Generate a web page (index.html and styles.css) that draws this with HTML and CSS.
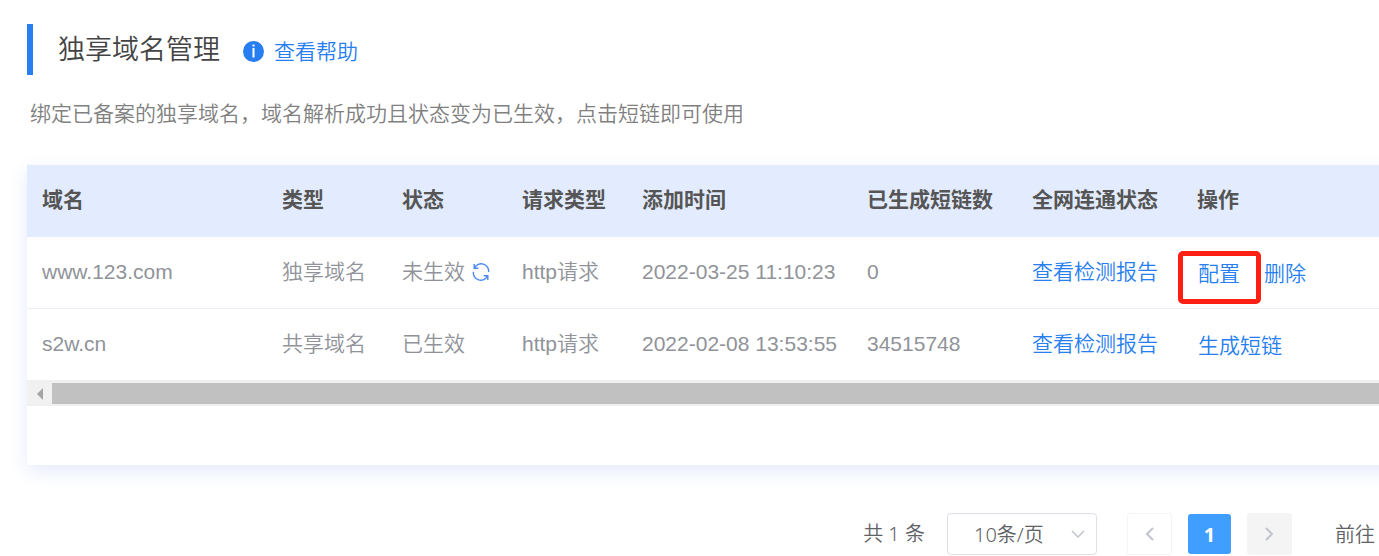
FILE: index.html
```
<!DOCTYPE html>
<html lang="zh-CN">
<head>
    <meta charset="UTF-8">
    <meta name="viewport" content="width=device-width, initial-scale=1.0">
    <title>独享域名管理</title>
    <link rel="stylesheet" href="styles.css">
</head>
<body>
    <div class="container">
        <div class="page-header">
            <h1>独享域名管理</h1>
            <a class="help-link" href="#">
                <svg class="info-icon" viewBox="0 0 21 21" aria-hidden="true">
                    <circle cx="10.5" cy="10.5" r="10.5" fill="#267ef0"/>
                    <path d="M9.5 3.5h2v2h-2zM9.5 7h2v9.5h-2z" fill="#fff"/>
                </svg>
                <span>查看帮助</span>
            </a>
        </div>
        <p class="description">绑定已备案的独享域名，域名解析成功且状态变为已生效，点击短链即可使用</p>

        <div class="table-card">
            <table>
                <colgroup>
                    <col class="col-domain">
                    <col class="col-small">
                    <col class="col-small">
                    <col class="col-small">
                    <col class="col-time">
                    <col class="col-medium">
                    <col class="col-medium">
                    <col>
                </colgroup>
                <thead>
                    <tr>
                        <th>域名</th>
                        <th>类型</th>
                        <th>状态</th>
                        <th>请求类型</th>
                        <th>添加时间</th>
                        <th>已生成短链数</th>
                        <th>全网连通状态</th>
                        <th>操作</th>
                    </tr>
                </thead>
                <tbody>
                    <tr>
                        <td>www.123.com</td>
                        <td>独享域名</td>
                        <td>
                            <div class="status">
                                <span>未生效</span>
                                <button class="refresh" type="button" aria-label="刷新">
                                    <svg viewBox="0 0 18 18" aria-hidden="true">
                                        <path d="M2.2 1v4.2h4.2M2.6 5A7.4 7.4 0 0 1 16.6 9.2M15.8 17v-4.2h-4.2M15.4 13A7.4 7.4 0 0 1 1.4 8.8"/>
                                    </svg>
                                </button>
                            </div>
                        </td>
                        <td>http请求</td>
                        <td>2022-03-25 11:10:23</td>
                        <td>0</td>
                        <td><a href="#">查看检测报告</a></td>
                        <td>
                            <div class="actions">
                                <a class="marked" href="#">配置</a>
                                <a href="#">删除</a>
                            </div>
                        </td>
                    </tr>
                    <tr>
                        <td>s2w.cn</td>
                        <td>共享域名</td>
                        <td>已生效</td>
                        <td>http请求</td>
                        <td>2022-02-08 13:53:55</td>
                        <td>34515748</td>
                        <td><a href="#">查看检测报告</a></td>
                        <td>
                            <div class="actions">
                                <a href="#">生成短链</a>
                            </div>
                        </td>
                    </tr>
                </tbody>
            </table>
            <div class="scrollbar">
                <button class="scroll-left" type="button" aria-label="向左滚动">
                    <svg viewBox="0 0 6 12" aria-hidden="true"><path d="M6 0v12L0 6z"/></svg>
                </button>
                <div class="scroll-thumb"></div>
            </div>
        </div>

        <div class="pagination">
            <span class="total">共 1 条</span>
            <div class="page-size">
                <select aria-label="每页条数">
                    <option>10条/页</option>
                    <option>20条/页</option>
                </select>
                <svg class="select-arrow" viewBox="0 0 14 8" aria-hidden="true"><path d="M1 1l6 6 6-6"/></svg>
            </div>
            <button class="page-btn prev" type="button" aria-label="上一页">
                <svg viewBox="0 0 9 14" aria-hidden="true"><path d="M8 1L2 7l6 6"/></svg>
            </button>
            <button class="page-btn active" type="button">1</button>
            <button class="page-btn next" type="button" aria-label="下一页">
                <svg viewBox="0 0 9 14" aria-hidden="true"><path d="M1 1l6 6-6 6"/></svg>
            </button>
            <span class="jump">前往</span>
        </div>
    </div>
</body>
</html>
```
FILE: styles.css
```
* {
    box-sizing: border-box;
}
body {
    margin: 0;
    background-color: #fff;
    font-family: "Liberation Sans", "Noto Sans CJK SC", sans-serif;
    font-size: 21px;
    font-weight: 350;
    line-height: 30px;
    color: #909399;
    overflow: hidden;
}
a {
    color: #267ef0;
    text-decoration: none;
}
button {
    padding: 0;
    border: none;
    cursor: pointer;
}
svg {
    display: block;
}
.container {
    padding: 24px 0 0 27px;
}
.page-header {
    display: flex;
    align-items: center;
    height: 51px;
    padding-left: 25px;
    border-left: 6px solid #267ef0;
}
h1 {
    margin: 0;
    font-size: 27px;
    font-weight: 350;
    color: #444;
}
.help-link {
    display: flex;
    align-items: center;
    gap: 10px;
    margin-left: 23px;
    padding-top: 4px;
}
.info-icon {
    width: 21px;
    height: 21px;
}
.description {
    margin: 24px 0 36px;
    padding-left: 3px;
    color: #808080;
}

/* table */
.table-card {
    margin-right: -24px;
    padding-bottom: 59px;
    background-color: #fff;
    box-shadow: 0 6px 18px #e4eafa;
}
table {
    width: 100%;
    table-layout: fixed;
    border-collapse: separate;
    border-spacing: 0;
}
.col-domain {
    width: 240px;
}
.col-small {
    width: 120px;
}
.col-time {
    width: 225px;
}
.col-medium {
    width: 165px;
}
th, td {
    height: 72px;
    padding: 0 0 2px 15px;
    border-bottom: 1px solid #ebeef5;
    text-align: left;
    white-space: nowrap;
}
th {
    background-color: #e3ecff;
    border-bottom-color: #e3ecff;
    color: #555;
    font-weight: bold;
}
tbody tr:last-child td {
    height: 71px;
    border-bottom: none;
}
.status {
    display: flex;
    align-items: center;
    gap: 7px;
}
.refresh {
    background: none;
}
.refresh svg {
    width: 18px;
    height: 18px;
    fill: none;
    stroke: #4b88f3;
    stroke-width: 1.4;
}
.actions {
    display: flex;
    gap: 24px;
    padding: 4px 0 0 1px;
}
.marked {
    position: relative;
}
.marked::after {
    content: "";
    position: absolute;
    inset: -8px -21px -15px -20px;
    border: 5px solid #ff2013;
    border-radius: 5px;
}
.scrollbar {
    display: flex;
    height: 26px;
    padding: 3px 0 2px;
    background-color: #f0f0f2;
}
.scroll-left {
    display: flex;
    align-items: center;
    justify-content: center;
    width: 25px;
    background-color: #f1f1f1;
}
.scroll-left svg {
    width: 6px;
    height: 12px;
    fill: #a3a3a3;
}
.scroll-thumb {
    flex: 1;
    background-color: #c1c1c1;
}

/* pagination */
.pagination {
    display: flex;
    align-items: center;
    justify-content: flex-end;
    margin-top: 48px;
    padding-right: 4px;
    font-family: "Noto Sans", "Noto Sans CJK SC", sans-serif;
    font-size: 20px;
    color: #606266;
    white-space: nowrap;
}
.total {
    margin-right: 22px;
}
.page-size {
    display: grid;
    align-items: center;
    margin-right: 30px;
}
.page-size select,
.select-arrow {
    grid-area: 1 / 1;
}
.page-size select {
    appearance: none;
    width: 150px;
    height: 42px;
    padding: 2px 0 0 26px;
    border: 1px solid #dcdfe6;
    border-radius: 4px;
    background-color: #fff;
    color: #606266;
    font: inherit;
}
.select-arrow {
    justify-self: end;
    width: 14px;
    height: 8px;
    margin-right: 12px;
    fill: none;
    stroke: #c0c4cc;
    stroke-width: 1.5;
    pointer-events: none;
}
.page-btn {
    display: flex;
    align-items: center;
    justify-content: center;
    width: 45px;
    height: 42px;
    border-radius: 3px;
}
.page-btn svg {
    width: 9px;
    height: 14px;
    fill: none;
    stroke: #c0c4cc;
    stroke-width: 2;
}
.prev {
    border: 1px solid #f4f4f5;
    background-color: #fff;
}
.active {
    width: 43px;
    height: 40px;
    margin: 0 16px;
    background-color: #409eff;
    color: #fff;
    font-family: inherit;
    font-size: 20px;
    font-weight: bold;
}
.next {
    background-color: #f4f4f5;
}
.jump {
    margin-left: 43px;
    padding-top: 2px;
}
```
